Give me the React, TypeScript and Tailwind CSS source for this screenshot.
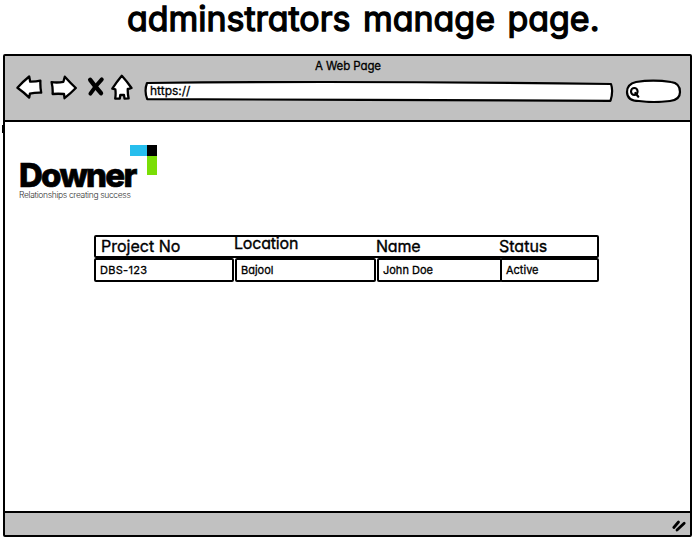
import type { ReactNode } from "react";

const font = "font-['Inter','Noto_Sans',sans-serif] [font-feature-settings:'cv11'] whitespace-nowrap";

function Arrow({ flip = false }: { flip?: boolean }) {
  return (
    <svg className="block shrink-0" width="27" height="26" viewBox="0 0 27 26" fill="white" stroke="black" strokeWidth="2.3" strokeLinejoin="round" strokeLinecap="round">
      {flip ? (
        <path d="M1.6 8.2 Q8 9 13.4 7.8 L14.8 2.7 Q20.5 9 25.8 14 Q20.5 19.5 14.5 24.2 L14 20 Q8 19.5 2.6 20 Q3 14 1.6 8.2Z" />
      ) : (
        <path d="M1.4 13.8 Q7 7.5 13.2 2.5 L14.2 7.7 Q20 7.8 24.4 6.7 Q24.1 13 25.2 18.7 Q19 18.5 13.9 19.7 L13.2 23.6 Q8 18.5 1.4 13.8Z" />
      )}
    </svg>
  );
}

function Cell({ children, className }: { children: ReactNode; className: string }) {
  return (
    <div className={`h-6 border-2 border-black bg-white rounded-[2px] flex items-center text-[11px] leading-[14px] pl-1 [-webkit-text-stroke:0.3px_black] ${className}`}>
      <span>{children}</span>
    </div>
  );
}

export default function App() {
  return (
    <div className={`w-[694px] h-[541px] bg-white text-black overflow-hidden ${font}`}>
      <h1 className="h-[54px] pl-[127px] text-[34px] leading-[37px] font-normal tracking-[-0.03px] [word-spacing:3px] [-webkit-text-stroke:1.3px_black]">
        adminstrators manage page.
      </h1>
      <main className="relative ml-[3px] w-[689px] h-[483px] border-2 border-black rounded-[2px] flex flex-col">
        <div className="absolute -left-[3px] top-[69px] h-2 w-[2px] bg-black" />
        <header className="h-[66px] shrink-0 bg-[#c1c1c1] border-b-2 border-black flex flex-col">
          <div className="h-[18px] pt-[3px] pl-[310px] text-[11.5px] leading-[15px] tracking-[-0.1px] [-webkit-text-stroke:0.3px_black]">A Web Page</div>
          <div className="flex h-[28px] items-start pl-[11px]">
            <Arrow />
            <div className="ml-[7px]"><Arrow flip /></div>
            <svg className="ml-[10px] block shrink-0" width="18" height="26" viewBox="0 0 18 26" fill="none" stroke="black" strokeLinecap="round">
              <path d="M3.2 5.8 L8 12 L14 19.2" strokeWidth="4.4" />
              <path d="M14.8 5.4 L9 12 L3.4 19.6" strokeWidth="3.9" />
            </svg>
            <svg className="ml-[6px] block shrink-0" width="22" height="27" viewBox="0 0 22 27" fill="white" stroke="black" strokeWidth="2.3" strokeLinejoin="round">
              <path d="M10.8 1.8 Q16 7.5 20.5 14 Q18 15 16.8 14.8 Q16.5 19.5 17.6 24.3 L13.5 24.7 L13 21 L9.3 21 L8.8 24.5 L4.2 24.7 Q5 19.5 4.3 15.3 L1.3 14.7 Q6 7.5 10.8 1.8Z" />
            </svg>
            <div className="relative ml-[11px] w-[470px] h-[28px] shrink-0">
              <svg className="absolute inset-0" width="470" height="28" viewBox="0 0 470 28" fill="white" stroke="black" strokeWidth="2.2" strokeLinejoin="round">
                <path d="M3 9 Q90 8 180 8 Q320 8 467 10 Q469.5 17 466.5 26.8 Q350 26 220 25.8 Q100 25.6 3.2 25.2 Q0 17 3 9Z" />
              </svg>
              <span className="relative block pl-[6px] pt-[10px] text-[12px] leading-[14px] [-webkit-text-stroke:0.3px_black]">https://</span>
            </div>
            <svg className="ml-[11px] block shrink-0" width="57" height="29" viewBox="0 0 57 29" fill="white" stroke="black" strokeWidth="2.2">
              <path d="M11 8 Q28 5.2 46 8 Q55 9 55 18 Q55 26 45 27 Q28 29 14 27 Q2 27 2 18 Q2 10 11 8Z" />
              <ellipse cx="9.3" cy="17.5" rx="3.3" ry="3.5" fill="none" strokeWidth="2.1" />
              <path d="M10.3 19 L13.3 22.7" strokeLinecap="round" />
            </svg>
          </div>
        </header>
        <section className="flex-1 bg-white flex flex-col">
          <div className="flex h-[113px] items-start pl-[14px] pt-[23px]">
            <div className="w-[124px] pt-[13px] shrink-0">
              <div className="h-[32px] text-[33px] leading-[34px] font-extrabold tracking-[-1.75px] [-webkit-text-stroke:0.7px_black] [font-feature-settings:normal]">Downer</div>
              <div className="text-[8.5px] leading-[11px] tracking-[-0.34px] font-light text-[#303030] [font-feature-settings:normal]">Relationships creating success</div>
            </div>
            <div className="ml-[-13px] grid grid-cols-[17px_10px] grid-rows-[11px_19px]">
              <div className="bg-[#27beed]" />
              <div className="bg-black" />
              <div />
              <div className="bg-[#7ade06]" />
            </div>
          </div>
          <div className="ml-[89px] w-[505px]">
            <div className="h-[23px] border-2 border-black rounded-[2px] flex text-[16px] leading-[18px] [-webkit-text-stroke:0.35px_black]">
              <span className="w-[134px] pl-[5px]">Project No</span>
              <span className="w-[141px] pl-[4px] -mt-[3px] tracking-[-0.2px]">Location</span>
              <span className="w-[123px] pl-[5px] tracking-[-0.2px]">Name</span>
              <span className="pl-[5px]">Status</span>
            </div>
            <div className="flex">
              <Cell className="w-[140px] tracking-[0.3px]">DBS-123</Cell>
              <Cell className="ml-px w-[141px]">Bajool</Cell>
              <Cell className="ml-px w-[125px]">John Doe</Cell>
              <Cell className="-ml-[2px] w-[99px]">Active</Cell>
            </div>
          </div>
        </section>
        <footer className="h-[24px] shrink-0 bg-[#c1c1c1] border-t-2 border-black flex justify-end items-start">
          <svg className="mr-[2px] mt-[5px]" width="17" height="14" viewBox="0 0 17 14" stroke="black" strokeLinecap="round" strokeWidth="2.8">
            <path d="M2.8 9.5 L7.5 4 M6 12 L13.2 5.2" />
          </svg>
        </footer>
      </main>
    </div>
  );
}
